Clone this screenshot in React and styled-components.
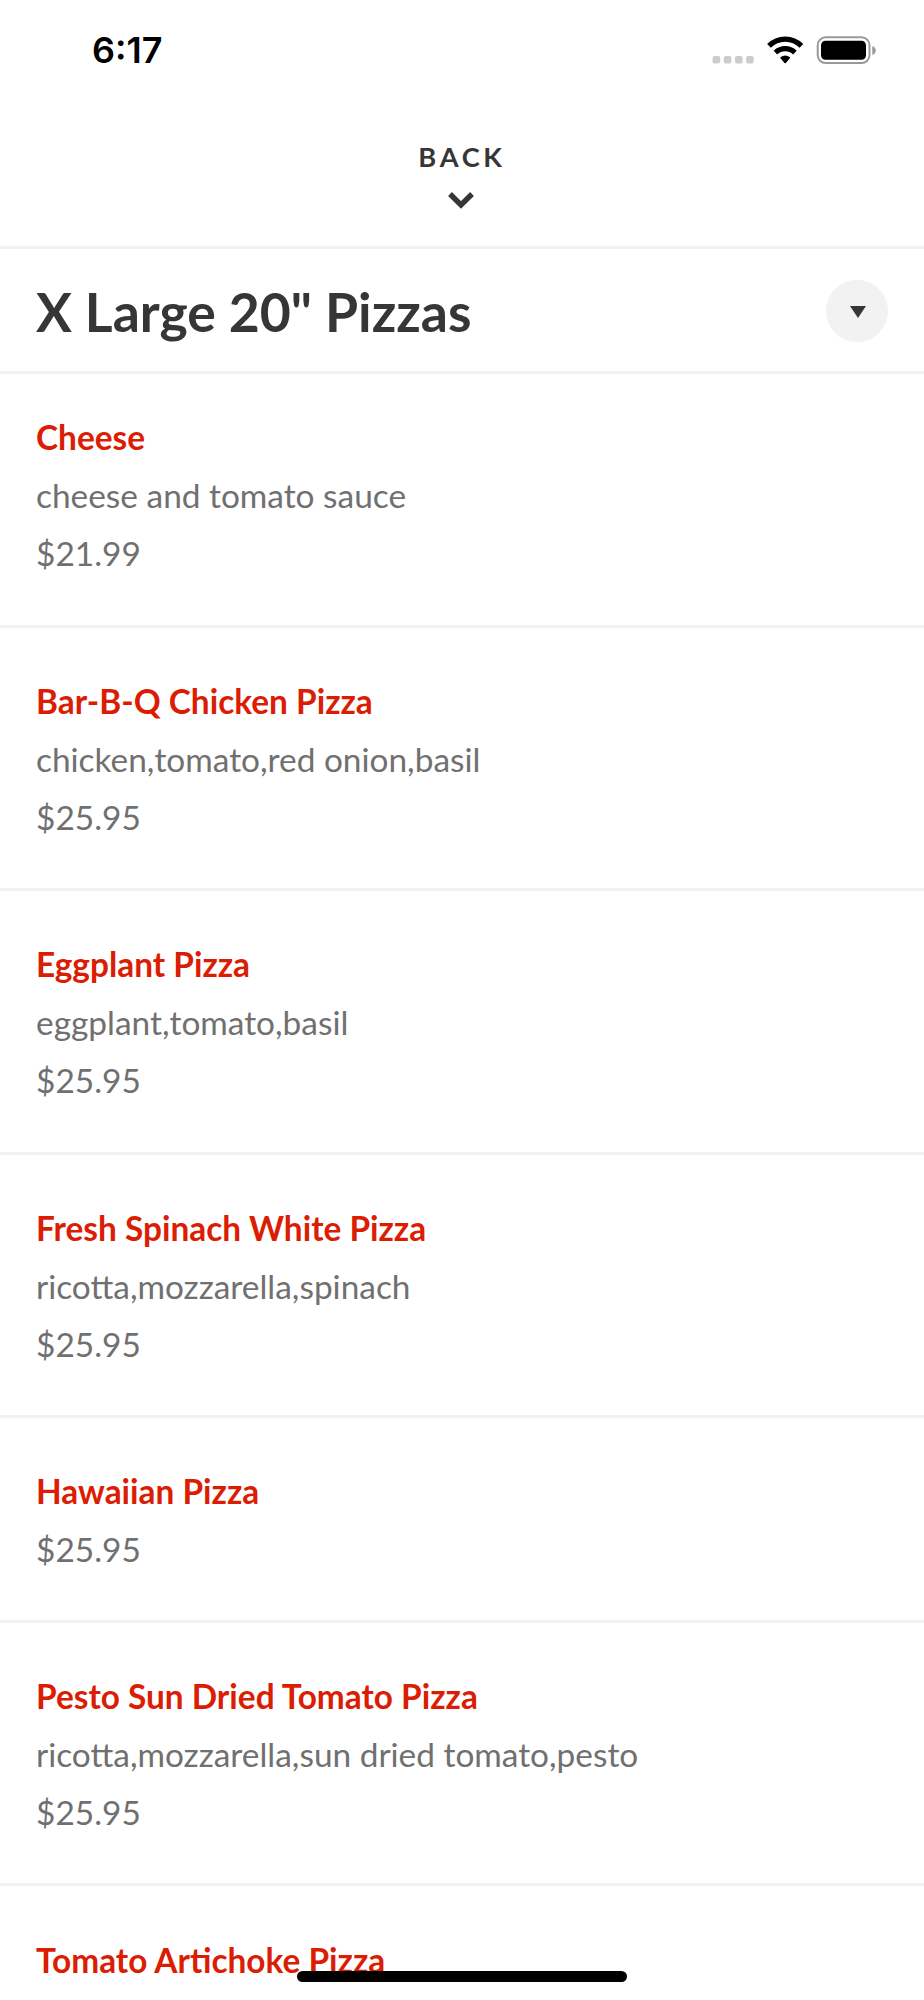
import React from "react";
import styled, { createGlobalStyle } from "styled-components";

const GlobalStyle = createGlobalStyle`
  * { box-sizing: border-box; }
  body { margin: 0; background: #fff; font-family: Lato, sans-serif; }
`;

const Screen = styled.div`
  position: relative;
  width: 924px;
  height: 2000px;
  overflow: hidden;
  background: #fff;
`;

const StatusBar = styled.header`
  height: 102px;
  padding: 0 48px 0 92px;
  display: flex;
  justify-content: space-between;
`;

const Clock = styled.span`
  font: 600 36px/101px Inter, sans-serif;
  letter-spacing: 0;
  color: #000;
`;

const BackButton = styled.div`
  height: 147px;
  padding: 37px 3px 0 0;
  display: flex;
  flex-direction: column;
  align-items: center;
  border-bottom: 3px solid #f2f2f2;
  color: #363636;
  svg { margin-top: 15px; }
`;

const BackLabel = styled.span`
  font-size: 27.2px;
  line-height: 36px;
  font-weight: 700;
  letter-spacing: 3.7px;
  margin-right: -3px;
`;

const TitleRow = styled.div`
  height: 125px;
  padding: 2px 36px 0;
  display: flex;
  align-items: center;
  justify-content: space-between;
  border-bottom: 3px solid #f2f2f2;
`;

const Title = styled.h1`
  margin: 0;
  font-size: 53.5px;
  line-height: 64px;
  font-weight: 700;
  color: #363636;
`;

const RoundButton = styled.div`
  width: 62px;
  height: 62px;
  padding: 2px 0 0 2px;
  border-radius: 50%;
  background: #f2f2f2;
  display: flex;
  align-items: center;
  justify-content: center;
`;

const Item = styled.article`
  padding: ${(p) => (p.$first ? "34.4px" : "44.2px")} 36px ${(p) => (p.$first ? "42.6px" : "42.1px")};
  border-bottom: 3px solid #f2f2f2;
`;

const Name = styled.h2`
  margin: 0;
  font-size: 33.4px;
  line-height: 58px;
  font-weight: 700;
  color: #db1d04;
`;

const Detail = styled.p`
  margin: 0;
  font-size: 33.42px;
  line-height: 58px;
  color: #707070;
`;

const HomeIndicator = styled.div`
  position: absolute;
  left: 297px;
  bottom: 18px;
  width: 330px;
  height: 11px;
  border-radius: 6px;
  background: #000;
`;

const items = [
  ["Cheese", "cheese and tomato sauce", "$21.99"],
  ["Bar-B-Q Chicken Pizza", "chicken,tomato,red onion,basil", "$25.95"],
  ["Eggplant Pizza", "eggplant,tomato,basil", "$25.95"],
  ["Fresh Spinach White Pizza", "ricotta,mozzarella,spinach", "$25.95"],
  ["Hawaiian Pizza", null, "$25.95"],
  ["Pesto Sun Dried Tomato Pizza", "ricotta,mozzarella,sun dried tomato,pesto", "$25.95"],
  ["Tomato Artichoke Pizza", null, null],
];

const StatusIcons = () => (
  <svg width="165" height="102" viewBox="711 0 165 102">
    <g fill="#ccc">
      {[712.6, 723.8, 735, 746.1].map((x) => <rect key={x} x={x} y="56" width="7.600" height="7.400" rx="2" />)}
    </g>
    <g fill="none" stroke="#000" strokeWidth="5.200">
      <path d="M769 45.900A22.700 22.700 0 0 1 801.400 45.900" />
      <path d="M775.500 52.600A14 14 0 0 1 794.900 52.600" />
    </g>
    <path d="M780.600 58.300Q780 57.700 780.700 57.100Q785.200 53.700 789.700 57.100Q790.400 57.700 789.800 58.300L785.900 62.900Q785.200 63.700 784.500 62.900Z" />
    <rect x="817.700" y="37.300" width="51.800" height="25.800" rx="8" fill="none" stroke="#999" strokeWidth="2" />
    <rect x="821" y="40.700" width="45" height="19" rx="4.500" />
    <path d="M872.300 45.900v9q3.400-1.300 3.400-4.500t-3.400-4.500" fill="#999" />
  </svg>
);

export default function App() {
  return (
    <Screen>
      <GlobalStyle />
      <StatusBar><Clock>6:17</Clock><StatusIcons /></StatusBar>
      <BackButton>
        <BackLabel>BACK</BackLabel>
        <svg width="28" height="20" viewBox="0 0 28 20"><path d="M3 4L14 15L25 4" fill="none" stroke="#363636" strokeWidth="5.400" /></svg>
      </BackButton>
      <TitleRow>
        <Title>X Large 20" Pizzas</Title>
        <RoundButton><svg width="16" height="12"><path d="M0 0H16L8 12Z" fill="#363636" /></svg></RoundButton>
      </TitleRow>
      {items.map(([name, description, price], i) => (
        <Item key={name} $first={i === 0}>
          <Name>{name}</Name>
          {description && <Detail>{description}</Detail>}
          {price && <Detail>{price}</Detail>}
        </Item>
      ))}
      <HomeIndicator />
    </Screen>
  );
}
